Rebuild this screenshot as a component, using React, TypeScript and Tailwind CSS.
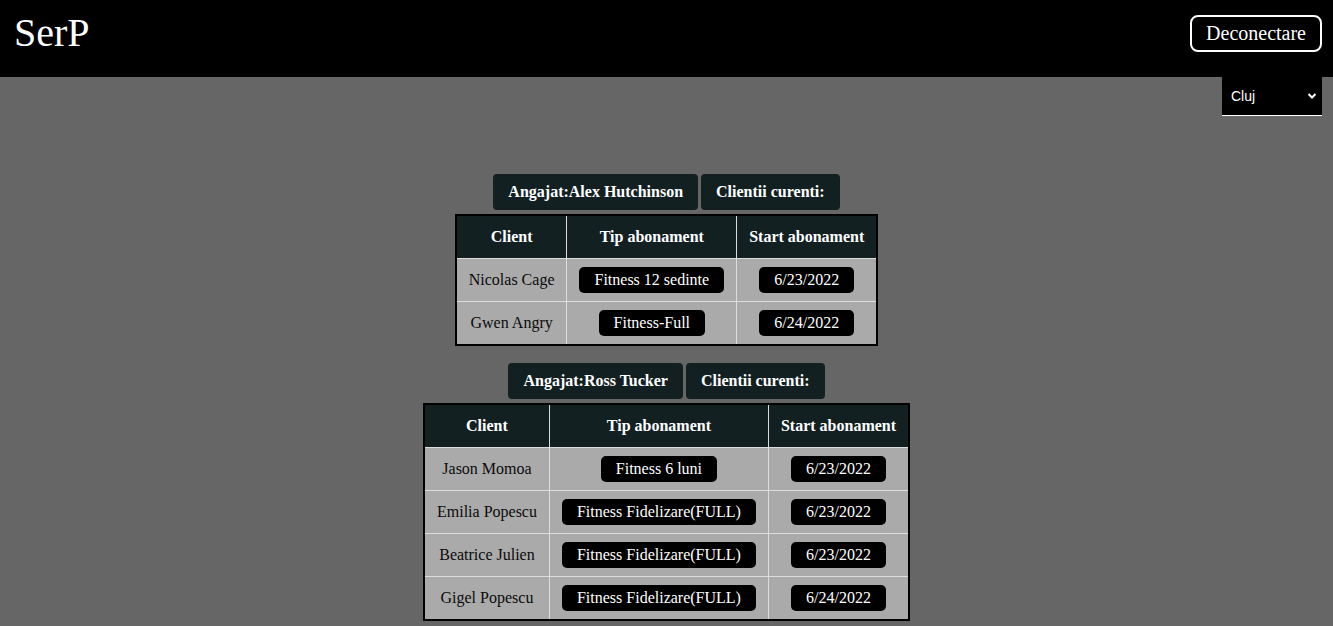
import React from "react";

const groups = [
  {
    name: "Alex Hutchinson",
    rows: [
      ["Nicolas Cage", "Fitness 12 sedinte", "6/23/2022"],
      ["Gwen Angry", "Fitness-Full", "6/24/2022"],
    ],
  },
  {
    name: "Ross Tucker",
    rows: [
      ["Jason Momoa", "Fitness 6 luni", "6/23/2022"],
      ["Emilia Popescu", "Fitness Fidelizare(FULL)", "6/23/2022"],
      ["Beatrice Julien", "Fitness Fidelizare(FULL)", "6/23/2022"],
      ["Gigel Popescu", "Fitness Fidelizare(FULL)", "6/24/2022"],
    ],
  },
];

const serif = { fontFamily: '"Liberation Serif", "Times New Roman", serif' };

function Pill({ children }: { children: React.ReactNode }) {
  return (
    <span className="inline-block bg-black text-white rounded-[5px] px-[15px] py-[4px] leading-[18px] whitespace-nowrap">
      {children}
    </span>
  );
}

function Group({ name, rows }: { name: string; rows: string[][] }) {
  return (
    <div className="flex flex-col items-center">
      <div className="flex gap-[3px]">
        <div className="bg-[#132022] text-white font-bold text-[16px] leading-[18px] px-[15px] py-[9px] rounded-[4px]">
          Angajat:{name}
        </div>
        <div className="bg-[#132022] text-white font-bold text-[16px] leading-[18px] px-[15px] py-[9px] rounded-[4px]">
          Clientii curenti:
        </div>
      </div>
      <table className="mt-[4px] border-collapse border-2 border-black bg-[#aaaaaa] text-[16px]">
        <thead>
          <tr className="bg-[#132022] text-white">
            <th className="border border-[#dddddd] px-[12px] py-[12px] leading-[18px] font-bold">Client</th>
            <th className="border border-[#dddddd] px-[12px] py-[12px] leading-[18px] font-bold">Tip abonament</th>
            <th className="border border-[#dddddd] px-[12px] py-[12px] leading-[18px] font-bold">Start abonament</th>
          </tr>
        </thead>
        <tbody>
          {rows.map((r, i) => (
            <tr key={i}>
              <td className="border border-[#dddddd] px-[12px] py-[8px] text-center text-[#0a0a0a] whitespace-nowrap">{r[0]}</td>
              <td className="border border-[#dddddd] px-[12px] py-[8px] text-center">
                <Pill>{r[1]}</Pill>
              </td>
              <td className="border border-[#dddddd] px-[12px] py-[8px] text-center">
                <Pill>{r[2]}</Pill>
              </td>
            </tr>
          ))}
        </tbody>
      </table>
    </div>
  );
}

export default function App() {
  return (
    <div className="min-h-screen bg-[#666666]" style={serif}>
      <header className="h-[77px] bg-black flex justify-between items-start">
        <div className="ml-[14px] mt-[10px] text-white text-[40px] leading-[46px]">SerP</div>
        <button className="mt-[15px] mr-[11px] h-[37px] px-[14px] border-2 border-white rounded-[8px] text-white text-[20px] leading-[23px] bg-black">
          Deconectare
        </button>
      </header>
      <div className="flex justify-end pr-[11px]">
        <div className="relative w-[100px] h-[39px] bg-black border-b border-white">
          <select
            className="appearance-none w-full h-full bg-black text-white text-[14px] pl-[9px] outline-none"
            style={{ fontFamily: '"Liberation Sans", Arial, sans-serif' }}
            defaultValue="Cluj"
          >
            <option>Cluj</option>
          </select>
          <svg
            className="absolute right-[5px] top-[15px] pointer-events-none"
            width="10"
            height="8"
            viewBox="0 0 10 8"
          >
            <path d="M1.5 2 L5 5.5 L8.5 2" stroke="white" strokeWidth="2" fill="none" />
          </svg>
        </div>
      </div>
      <main className="flex flex-col items-center gap-[17px] pt-[58px] pb-[6px]">
        {groups.map((g) => (
          <Group key={g.name} name={g.name} rows={g.rows} />
        ))}
      </main>
    </div>
  );
}
